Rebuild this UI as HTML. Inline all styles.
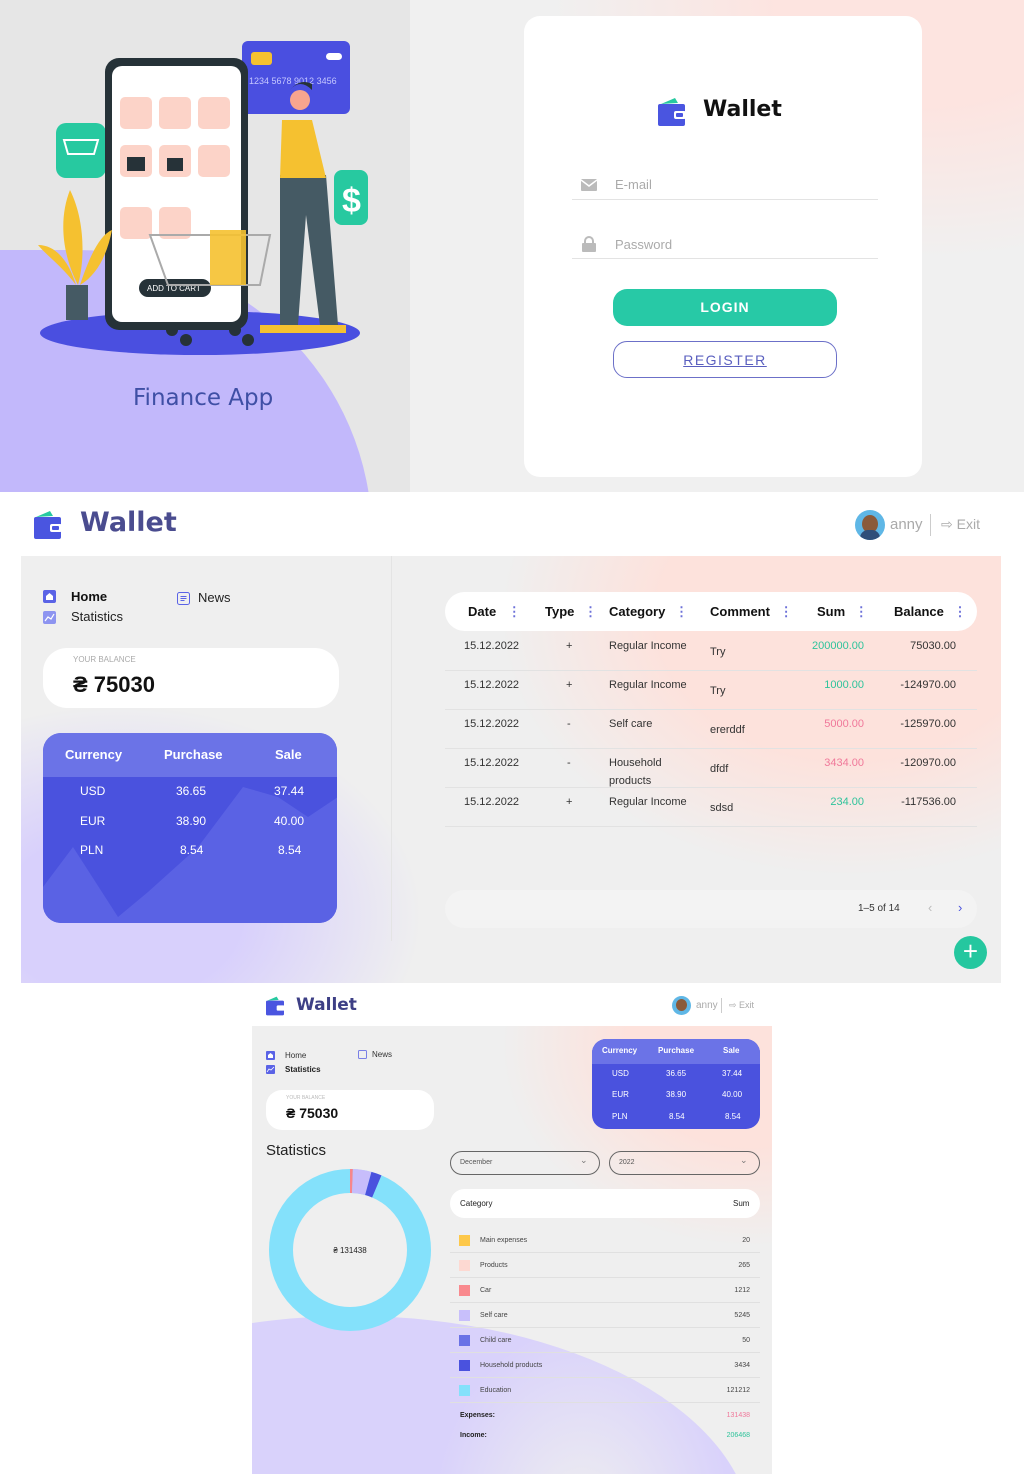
<!DOCTYPE html>
<html><head><meta charset="utf-8">
<style>
*{margin:0;padding:0;box-sizing:border-box}
html,body{width:1024px;height:1474px;overflow:hidden}
body{position:relative;background:#fff;font-family:"Liberation Sans",sans-serif;color:#222}
.a{position:absolute}
.t{position:absolute;white-space:nowrap}
</style></head><body>

<!-- SECTION 1 -->
<div class="a" style="left:0;top:0;width:410px;height:492px;background:#e6e6e6;overflow:hidden">
  <div class="a" style="left:-120px;top:250px;width:492px;height:520px;border-radius:0 60% 0 0/0 55% 0 0;background:#c2b8fb"></div>
  <svg class="a" style="left:0;top:0" width="410" height="492">
    <ellipse cx="200" cy="333" rx="160" ry="22" fill="#4a4fe0"/>
    <rect x="56" y="123" width="50" height="55" rx="10" fill="#27c9a0"/>
    <path d="M64 140h34l-4 14H68z" fill="none" stroke="#fff" stroke-width="2"/>
    <rect x="334" y="170" width="34" height="55" rx="8" fill="#27c9a0"/>
    <text x="342" y="212" font-size="34" font-weight="bold" fill="#fff" font-family="Liberation Sans">$</text>
    <rect x="242" y="41" width="108" height="73" rx="6" fill="#4a4fe0"/>
    <rect x="251" y="52" width="21" height="13" rx="3" fill="#f5c130"/>
    <rect x="326" y="53" width="16" height="7" rx="3.5" fill="#fff"/>
    <text x="249" y="84" font-size="9" fill="#c6c8ff">1234 5678 9012 3456</text>
    <rect x="105" y="58" width="143" height="272" rx="14" fill="#263238"/>
    <rect x="112" y="66" width="129" height="256" rx="10" fill="#fff"/>
    <g fill="#fcd3c8">
      <rect x="120" y="97" width="32" height="32" rx="5"/><rect x="159" y="97" width="32" height="32" rx="5"/><rect x="198" y="97" width="32" height="32" rx="5"/>
      <rect x="120" y="145" width="32" height="32" rx="5"/><rect x="159" y="145" width="32" height="32" rx="5"/><rect x="198" y="145" width="32" height="32" rx="5"/>
      <rect x="120" y="207" width="32" height="32" rx="5"/><rect x="159" y="207" width="32" height="32" rx="5"/>
    </g>
    <g fill="#263238"><rect x="127" y="157" width="18" height="14"/><rect x="167" y="158" width="16" height="13"/></g>
    <rect x="139" y="279" width="72" height="18" rx="9" fill="#263238"/>
    <text x="147" y="291" font-size="8" fill="#fff">ADD TO CART</text>
    <path d="M88 320V285H66v35z" fill="#455a64"/>
    <path d="M78 285C60 250 60 215 70 190 85 220 85 260 78 285M80 285c10-30 20-50 32-55-5 25-15 45-32 55M76 285c-15-20-30-30-38-40 20 0 32 20 38 40" fill="#f5c130"/>
    <path d="M280 175h46l12 150h-18l-14-110-8 110h-18z" fill="#455a64"/>
    <path d="M282 120h30l14 58h-46z" fill="#f5c130"/>
    <circle cx="300" cy="100" r="10" fill="#f7a58f"/>
    <path d="M290 90q10-12 22 0v-6q-12-6-22 6z" fill="#263238"/>
    <path d="M260 325h40v8h-40zM300 325h46v8h-46z" fill="#f5c130"/>
    <path d="M150 235h120l-10 50H168z" fill="none" stroke="#aaa" stroke-width="2"/>
    <rect x="210" y="230" width="36" height="55" fill="#f5c130" opacity=".9"/>
    <g fill="#263238"><circle cx="172" cy="330" r="6"/><circle cx="186" cy="340" r="6"/><circle cx="235" cy="330" r="6"/><circle cx="248" cy="340" r="6"/></g>
    <text x="133" y="405" font-size="23" fill="#3f4fa5" font-family="DejaVu Sans">Finance App</text>
  </svg>
</div>
<div class="a" style="left:410px;top:0;width:614px;height:492px;background:radial-gradient(ellipse 380px 260px at 520px 0px,#fde4e0 40%,#f0f0f0 100%)"></div>
<div class="a" style="left:524px;top:16px;width:398px;height:461px;background:#fff;border-radius:16px">
  <svg class="a" style="left:133px;top:80px" width="32" height="32" viewBox="0 0 32 32"><path d="M4 8l14-6 3 5z" fill="#27c9a0"/><rect x="1" y="8" width="27" height="22" rx="2" fill="#4a55e0"/><rect x="17" y="15" width="12" height="8" rx="2" fill="#fff"/><rect x="19" y="17" width="7" height="4" rx="1" fill="#4a55e0"/></svg>
  <div class="t" style="left:179px;top:81px;font-size:22px;font-weight:bold;color:#111;font-family:'DejaVu Sans',sans-serif">Wallet</div>
  <svg class="a" style="left:57px;top:163px" width="16" height="12"><rect width="16" height="12" rx="1" fill="#bbb"/><path d="M0 1l8 6 8-6" fill="none" stroke="#fff" stroke-width="1.5"/></svg>
  <div class="t" style="left:91px;top:161px;font-size:13px;color:#aaa">E-mail</div>
  <div class="a" style="left:48px;top:183px;width:306px;height:1px;background:#e3e3e3"></div>
  <svg class="a" style="left:58px;top:220px" width="14" height="16"><path d="M3 8V5a4 4 0 018 0v3" fill="none" stroke="#bbb" stroke-width="2"/><rect y="7" width="14" height="9" rx="1" fill="#bbb"/></svg>
  <div class="t" style="left:91px;top:221px;font-size:13px;color:#aaa">Password</div>
  <div class="a" style="left:48px;top:242px;width:306px;height:1px;background:#e3e3e3"></div>
  <div class="a" style="left:89px;top:273px;width:224px;height:37px;border-radius:14px;background:#27c9a6;color:#fff;font-size:14px;font-weight:bold;letter-spacing:1px;text-align:center;line-height:37px">LOGIN</div>
  <div class="a" style="left:89px;top:325px;width:224px;height:37px;border-radius:14px;border:1px solid #6c70c8;color:#5a5fbf;font-size:14px;letter-spacing:1.5px;text-align:center;line-height:36px;text-decoration:underline">REGISTER</div>
</div>

<!-- SECTION 2 -->
<div class="a" style="left:0;top:492px;width:1024px;height:492px;background:#fff"></div>
<svg class="a" style="left:33px;top:510px" width="32" height="30" viewBox="0 0 32 30"><path d="M3 7l14-6 3 5z" fill="#27c9a0"/><rect x="1" y="7" width="27" height="22" rx="2" fill="#4a55e0"/><rect x="17" y="14" width="12" height="8" rx="2" fill="#fff"/><rect x="19" y="16" width="7" height="4" rx="1" fill="#4a55e0"/></svg>
<div class="t" style="left:80px;top:507px;font-size:27px;font-weight:bold;color:#4a4c8f;font-family:'DejaVu Sans',sans-serif">Wallet</div>
<div class="a" style="left:855px;top:510px;width:30px;height:30px;border-radius:50%;background:#5fb7e6;overflow:hidden"><div class="a" style="left:7px;top:5px;width:16px;height:18px;border-radius:50%;background:#8a5a3a"></div><div class="a" style="left:5px;top:20px;width:20px;height:12px;background:#2f4f7a;border-radius:8px 8px 0 0"></div></div>
<div class="t" style="left:890px;top:516px;font-size:15px;color:#aaa">anny</div>
<div class="a" style="left:930px;top:514px;width:1px;height:22px;background:#ccc"></div>
<div class="t" style="left:941px;top:516px;font-size:14px;color:#aaa">⇨ Exit</div>

<div class="a" style="left:21px;top:556px;width:980px;height:427px;background:#efefef;overflow:hidden">
  <div class="a" style="left:480px;top:-200px;width:700px;height:520px;background:radial-gradient(closest-side,#fde2dc 55%,rgba(253,226,220,0))"></div>
  <div class="a" style="left:-200px;top:150px;width:600px;height:420px;background:radial-gradient(closest-side,#d8d0fc 40%,rgba(216,208,252,0))"></div>
  <div class="a" style="left:370px;top:0;width:1px;height:385px;background:#e4e4e4"></div>
</div>
<svg class="a" style="left:43px;top:590px" width="13" height="13"><rect width="13" height="13" rx="2" fill="#5a63e6"/><path d="M3 10V6l3.5-3 3.5 3v4z" fill="#fff"/></svg>
<div class="t" style="left:71px;top:589px;font-size:13px;font-weight:bold;color:#111">Home</div>
<svg class="a" style="left:43px;top:611px" width="13" height="13"><rect width="13" height="13" rx="2" fill="#8d94f0"/><path d="M2 10l3-4 3 2 3-5" fill="none" stroke="#fff" stroke-width="1.2"/></svg>
<div class="t" style="left:71px;top:609px;font-size:13px;color:#222">Statistics</div>
<svg class="a" style="left:177px;top:592px" width="13" height="13"><rect x=".5" y=".5" width="12" height="12" rx="2" fill="none" stroke="#5a63e6"/><path d="M3.5 4.5h6M3.5 6.5h6M3.5 8.5h4" stroke="#5a63e6"/></svg>
<div class="t" style="left:198px;top:590px;font-size:13px;color:#222">News</div>
<div class="a" style="left:43px;top:648px;width:296px;height:60px;background:#fff;border-radius:24px"></div>
<div class="t" style="left:73px;top:655px;font-size:8px;color:#aaa">YOUR BALANCE</div>
<div class="t" style="left:73px;top:672px;font-size:22px;font-weight:bold;color:#111">₴ 75030</div>
<div class="a" style="left:43px;top:733px;width:294px;height:190px;border-radius:18px;background:#4a52de;overflow:hidden">
  <div class="a" style="left:0;top:0;width:294px;height:44px;background:#6b73e7"></div>
  <svg class="a" style="left:0;top:44px" width="294" height="146"><path d="M0 146V110l30-40 45 70 30-25 50-45 45-60 35 10 30 20 30-20 V146z" fill="#5a62e4"/></svg>
  <div class="t" style="left:22px;top:14px;font-size:13px;font-weight:bold;color:#fff">Currency</div>
  <div class="t" style="left:121px;top:14px;font-size:13px;font-weight:bold;color:#fff">Purchase</div>
  <div class="t" style="left:232px;top:14px;font-size:13px;font-weight:bold;color:#fff">Sale</div>
  <div class="t" style="left:37px;top:51px;font-size:12px;color:#fff">USD</div><div class="t" style="left:133px;top:51px;font-size:12px;color:#fff">36.65</div><div class="t" style="left:231px;top:51px;font-size:12px;color:#fff">37.44</div>
  <div class="t" style="left:37px;top:81px;font-size:12px;color:#fff">EUR</div><div class="t" style="left:133px;top:81px;font-size:12px;color:#fff">38.90</div><div class="t" style="left:231px;top:81px;font-size:12px;color:#fff">40.00</div>
  <div class="t" style="left:37px;top:110px;font-size:12px;color:#fff">PLN</div><div class="t" style="left:137px;top:110px;font-size:12px;color:#fff">8.54</div><div class="t" style="left:235px;top:110px;font-size:12px;color:#fff">8.54</div>
</div>

<div class="a" style="left:445px;top:592px;width:532px;height:39px;background:#fff;border-radius:20px"></div>
<div class="t" style="left:468px;top:604px;font-size:13px;font-weight:bold;color:#111">Date <span style="color:#6c70d8;margin-left:8px">⋮</span></div>
<div class="t" style="left:545px;top:604px;font-size:13px;font-weight:bold;color:#111">Type <span style="color:#6c70d8;margin-left:6px">⋮</span></div>
<div class="t" style="left:609px;top:604px;font-size:13px;font-weight:bold;color:#111">Category <span style="color:#6c70d8;margin-left:6px">⋮</span></div>
<div class="t" style="left:710px;top:604px;font-size:13px;font-weight:bold;color:#111">Comment <span style="color:#6c70d8;margin-left:6px">⋮</span></div>
<div class="t" style="left:817px;top:604px;font-size:13px;font-weight:bold;color:#111">Sum <span style="color:#6c70d8;margin-left:6px">⋮</span></div>
<div class="t" style="left:894px;top:604px;font-size:13px;font-weight:bold;color:#111">Balance <span style="color:#6c70d8;margin-left:6px">⋮</span></div>

<div style="font-size:11px;color:#333">
<div class="t" style="left:464px;top:640px">15.12.2022</div><div class="t" style="left:566px;top:640px">+</div><div class="t" style="left:609px;top:640px">Regular Income</div><div class="t" style="left:710px;top:646px">Try</div><div class="t" style="right:160px;top:640px;color:#2fc39b">200000.00</div><div class="t" style="right:68px;top:640px">75030.00</div>
<div class="a" style="left:445px;top:670px;width:532px;height:1px;background:#e2e2e2"></div>
<div class="t" style="left:464px;top:679px">15.12.2022</div><div class="t" style="left:566px;top:679px">+</div><div class="t" style="left:609px;top:679px">Regular Income</div><div class="t" style="left:710px;top:685px">Try</div><div class="t" style="right:160px;top:679px;color:#2fc39b">1000.00</div><div class="t" style="right:68px;top:679px">-124970.00</div>
<div class="a" style="left:445px;top:709px;width:532px;height:1px;background:#e2e2e2"></div>
<div class="t" style="left:464px;top:718px">15.12.2022</div><div class="t" style="left:567px;top:718px">-</div><div class="t" style="left:609px;top:718px">Self care</div><div class="t" style="left:710px;top:724px">ererddf</div><div class="t" style="right:160px;top:718px;color:#f0789a">5000.00</div><div class="t" style="right:68px;top:718px">-125970.00</div>
<div class="a" style="left:445px;top:748px;width:532px;height:1px;background:#e2e2e2"></div>
<div class="t" style="left:464px;top:757px">15.12.2022</div><div class="t" style="left:567px;top:757px">-</div><div class="t" style="left:609px;top:757px">Household</div><div class="t" style="left:609px;top:775px">products</div><div class="t" style="left:710px;top:763px">dfdf</div><div class="t" style="right:160px;top:757px;color:#f0789a">3434.00</div><div class="t" style="right:68px;top:757px">-120970.00</div>
<div class="a" style="left:445px;top:787px;width:532px;height:1px;background:#e2e2e2"></div>
<div class="t" style="left:464px;top:796px">15.12.2022</div><div class="t" style="left:566px;top:796px">+</div><div class="t" style="left:609px;top:796px">Regular Income</div><div class="t" style="left:710px;top:802px">sdsd</div><div class="t" style="right:160px;top:796px;color:#2fc39b">234.00</div><div class="t" style="right:68px;top:796px">-117536.00</div>
<div class="a" style="left:445px;top:826px;width:532px;height:1px;background:#e2e2e2"></div>
</div>
<div class="a" style="left:445px;top:890px;width:532px;height:38px;background:#f3f3f3;border-radius:19px"></div>
<div class="t" style="left:858px;top:903px;font-size:10px;color:#333">1–5 of 14</div>
<div class="t" style="left:928px;top:900px;font-size:13px;color:#bbb">‹</div>
<div class="t" style="left:958px;top:900px;font-size:13px;color:#4a52de">›</div>
<div class="a" style="left:954px;top:936px;width:33px;height:33px;border-radius:50%;background:#25c79f;color:#fff;font-size:26px;line-height:31px;text-align:center">+</div>

<!-- SECTION 3 -->
<div class="a" style="left:252px;top:984px;width:520px;height:42px;background:#fff"></div>
<svg class="a" style="left:265px;top:996px" width="22" height="20" viewBox="0 0 32 30"><path d="M3 7l14-6 3 5z" fill="#27c9a0"/><rect x="1" y="7" width="27" height="22" rx="2" fill="#4a55e0"/><rect x="17" y="14" width="12" height="8" rx="2" fill="#fff"/></svg>
<div class="t" style="left:296px;top:995px;font-size:17px;font-weight:bold;color:#3d3f85;font-family:'DejaVu Sans',sans-serif">Wallet</div>
<div class="a" style="left:672px;top:996px;width:19px;height:19px;border-radius:50%;background:#5fb7e6;overflow:hidden"><div class="a" style="left:4px;top:3px;width:11px;height:12px;border-radius:50%;background:#8a5a3a"></div></div>
<div class="t" style="left:696px;top:1000px;font-size:10px;color:#aaa">anny</div>
<div class="a" style="left:721px;top:998px;width:1px;height:15px;background:#ccc"></div>
<div class="t" style="left:729px;top:1000px;font-size:9px;color:#aaa">⇨ Exit</div>

<div class="a" style="left:252px;top:1026px;width:520px;height:448px;background:#efefef;overflow:hidden">
  <div class="a" style="left:250px;top:-180px;width:500px;height:400px;background:radial-gradient(closest-side,#fde2dc 50%,rgba(253,226,220,0))"></div>
  <div class="a" style="left:-300px;top:290px;width:800px;height:440px;border-radius:50%;background:#d9d2fb"></div>
  <div class="a" style="left:180px;top:300px;width:300px;height:400px;background:radial-gradient(closest-side,rgba(239,239,239,1),rgba(239,239,239,0))"></div>
</div>
<svg class="a" style="left:266px;top:1051px" width="9" height="9"><rect width="9" height="9" rx="1" fill="#5a63e6"/><path d="M2 7V4l2.5-2 2.5 2v3z" fill="#fff"/></svg>
<div class="t" style="left:285px;top:1051px;font-size:8px;color:#333">Home</div>
<svg class="a" style="left:266px;top:1065px" width="9" height="9"><rect width="9" height="9" rx="1" fill="#5a63e6"/><path d="M1 7l2-3 2 1 3-3" fill="none" stroke="#fff" stroke-width=".8"/></svg>
<div class="t" style="left:285px;top:1065px;font-size:8px;font-weight:bold;color:#222">Statistics</div>
<svg class="a" style="left:358px;top:1050px" width="9" height="9"><rect x=".5" y=".5" width="8" height="8" rx="1" fill="none" stroke="#7a80e6"/></svg>
<div class="t" style="left:372px;top:1050px;font-size:8px;color:#333">News</div>
<div class="a" style="left:266px;top:1090px;width:168px;height:40px;background:#fff;border-radius:16px"></div>
<div class="t" style="left:286px;top:1095px;font-size:5px;color:#bbb">YOUR BALANCE</div>
<div class="t" style="left:286px;top:1105px;font-size:14px;font-weight:bold;color:#111">₴ 75030</div>
<div class="t" style="left:266px;top:1142px;font-size:15px;color:#222">Statistics</div>
<svg class="a" style="left:269px;top:1169px" width="162" height="162" viewBox="0 0 162 162">
  <circle cx="81" cy="81" r="69" fill="none" stroke="#84e1fb" stroke-width="24"/>
  <circle cx="81" cy="81" r="69" fill="none" stroke="#f7868c" stroke-width="24" stroke-dasharray="2.5 500" transform="rotate(-90 81 81)"/>
  <circle cx="81" cy="81" r="69" fill="none" stroke="#c7bdfb" stroke-width="24" stroke-dasharray="0 2.5 16 500" transform="rotate(-90 81 81)"/>
  <circle cx="81" cy="81" r="69" fill="none" stroke="#4a52de" stroke-width="24" stroke-dasharray="0 18.5 9 500" transform="rotate(-90 81 81)"/>
  <text x="81" y="84" font-size="8" text-anchor="middle" fill="#222" font-family="Liberation Sans">₴ 131438</text>
</svg>
<div class="a" style="left:592px;top:1039px;width:168px;height:90px;border-radius:14px;background:#4a52de;overflow:hidden">
  <div class="a" style="left:0;top:0;width:168px;height:25px;background:#6b73e7"></div>
  <div class="t" style="left:10px;top:7px;font-size:8px;font-weight:bold;color:#fff">Currency</div>
  <div class="t" style="left:66px;top:7px;font-size:8px;font-weight:bold;color:#fff">Purchase</div>
  <div class="t" style="left:131px;top:7px;font-size:8px;font-weight:bold;color:#fff">Sale</div>
  <div class="t" style="left:20px;top:30px;font-size:8px;color:#fff">USD</div><div class="t" style="left:74px;top:30px;font-size:8px;color:#fff">36.65</div><div class="t" style="left:130px;top:30px;font-size:8px;color:#fff">37.44</div>
  <div class="t" style="left:20px;top:51px;font-size:8px;color:#fff">EUR</div><div class="t" style="left:74px;top:51px;font-size:8px;color:#fff">38.90</div><div class="t" style="left:130px;top:51px;font-size:8px;color:#fff">40.00</div>
  <div class="t" style="left:20px;top:73px;font-size:8px;color:#fff">PLN</div><div class="t" style="left:77px;top:73px;font-size:8px;color:#fff">8.54</div><div class="t" style="left:133px;top:73px;font-size:8px;color:#fff">8.54</div>
</div>
<div class="a" style="left:450px;top:1151px;width:150px;height:24px;border:1px solid #666;border-radius:12px"></div>
<div class="t" style="left:460px;top:1159px;font-size:7px;color:#555">December</div><div class="t" style="left:580px;top:1155px;font-size:9px;color:#777">⌄</div>
<div class="a" style="left:609px;top:1151px;width:151px;height:24px;border:1px solid #666;border-radius:12px"></div>
<div class="t" style="left:619px;top:1159px;font-size:7px;color:#555">2022</div><div class="t" style="left:740px;top:1155px;font-size:9px;color:#777">⌄</div>
<div class="a" style="left:450px;top:1189px;width:310px;height:29px;background:#fff;border-radius:15px"></div>
<div class="t" style="left:460px;top:1199px;font-size:8px;color:#222">Category</div>
<div class="t" style="left:733px;top:1199px;font-size:8px;color:#222">Sum</div>
<div style="font-size:7px;color:#444">
<div class="a" style="left:459px;top:1235px;width:11px;height:11px;background:#fdc84a"></div><div class="t" style="left:480px;top:1237px">Main expenses</div><div class="t" style="right:274px;top:1237px">20</div>
<div class="a" style="left:450px;top:1252px;width:310px;height:1px;background:#e0e0e0"></div>
<div class="a" style="left:459px;top:1260px;width:11px;height:11px;background:#fdd9d2"></div><div class="t" style="left:480px;top:1262px">Products</div><div class="t" style="right:274px;top:1262px">265</div>
<div class="a" style="left:450px;top:1277px;width:310px;height:1px;background:#e0e0e0"></div>
<div class="a" style="left:459px;top:1285px;width:11px;height:11px;background:#f9898e"></div><div class="t" style="left:480px;top:1287px">Car</div><div class="t" style="right:274px;top:1287px">1212</div>
<div class="a" style="left:450px;top:1302px;width:310px;height:1px;background:#e0e0e0"></div>
<div class="a" style="left:459px;top:1310px;width:11px;height:11px;background:#c8bffb"></div><div class="t" style="left:480px;top:1312px">Self care</div><div class="t" style="right:274px;top:1312px">5245</div>
<div class="a" style="left:450px;top:1327px;width:310px;height:1px;background:#e0e0e0"></div>
<div class="a" style="left:459px;top:1335px;width:11px;height:11px;background:#6a72e6"></div><div class="t" style="left:480px;top:1337px">Child care</div><div class="t" style="right:274px;top:1337px">50</div>
<div class="a" style="left:450px;top:1352px;width:310px;height:1px;background:#e0e0e0"></div>
<div class="a" style="left:459px;top:1360px;width:11px;height:11px;background:#4a52de"></div><div class="t" style="left:480px;top:1362px">Household products</div><div class="t" style="right:274px;top:1362px">3434</div>
<div class="a" style="left:450px;top:1377px;width:310px;height:1px;background:#e0e0e0"></div>
<div class="a" style="left:459px;top:1385px;width:11px;height:11px;background:#84e1fb"></div><div class="t" style="left:480px;top:1387px">Education</div><div class="t" style="right:274px;top:1387px">121212</div>
<div class="a" style="left:450px;top:1402px;width:310px;height:1px;background:#e0e0e0"></div>
<div class="t" style="left:460px;top:1412px;font-weight:bold;color:#222">Expenses:</div><div class="t" style="right:274px;top:1412px;color:#f0789a">131438</div>
<div class="t" style="left:460px;top:1432px;font-weight:bold;color:#222">Income:</div><div class="t" style="right:274px;top:1432px;color:#2fc39b">206468</div>
</div>
</body></html>
